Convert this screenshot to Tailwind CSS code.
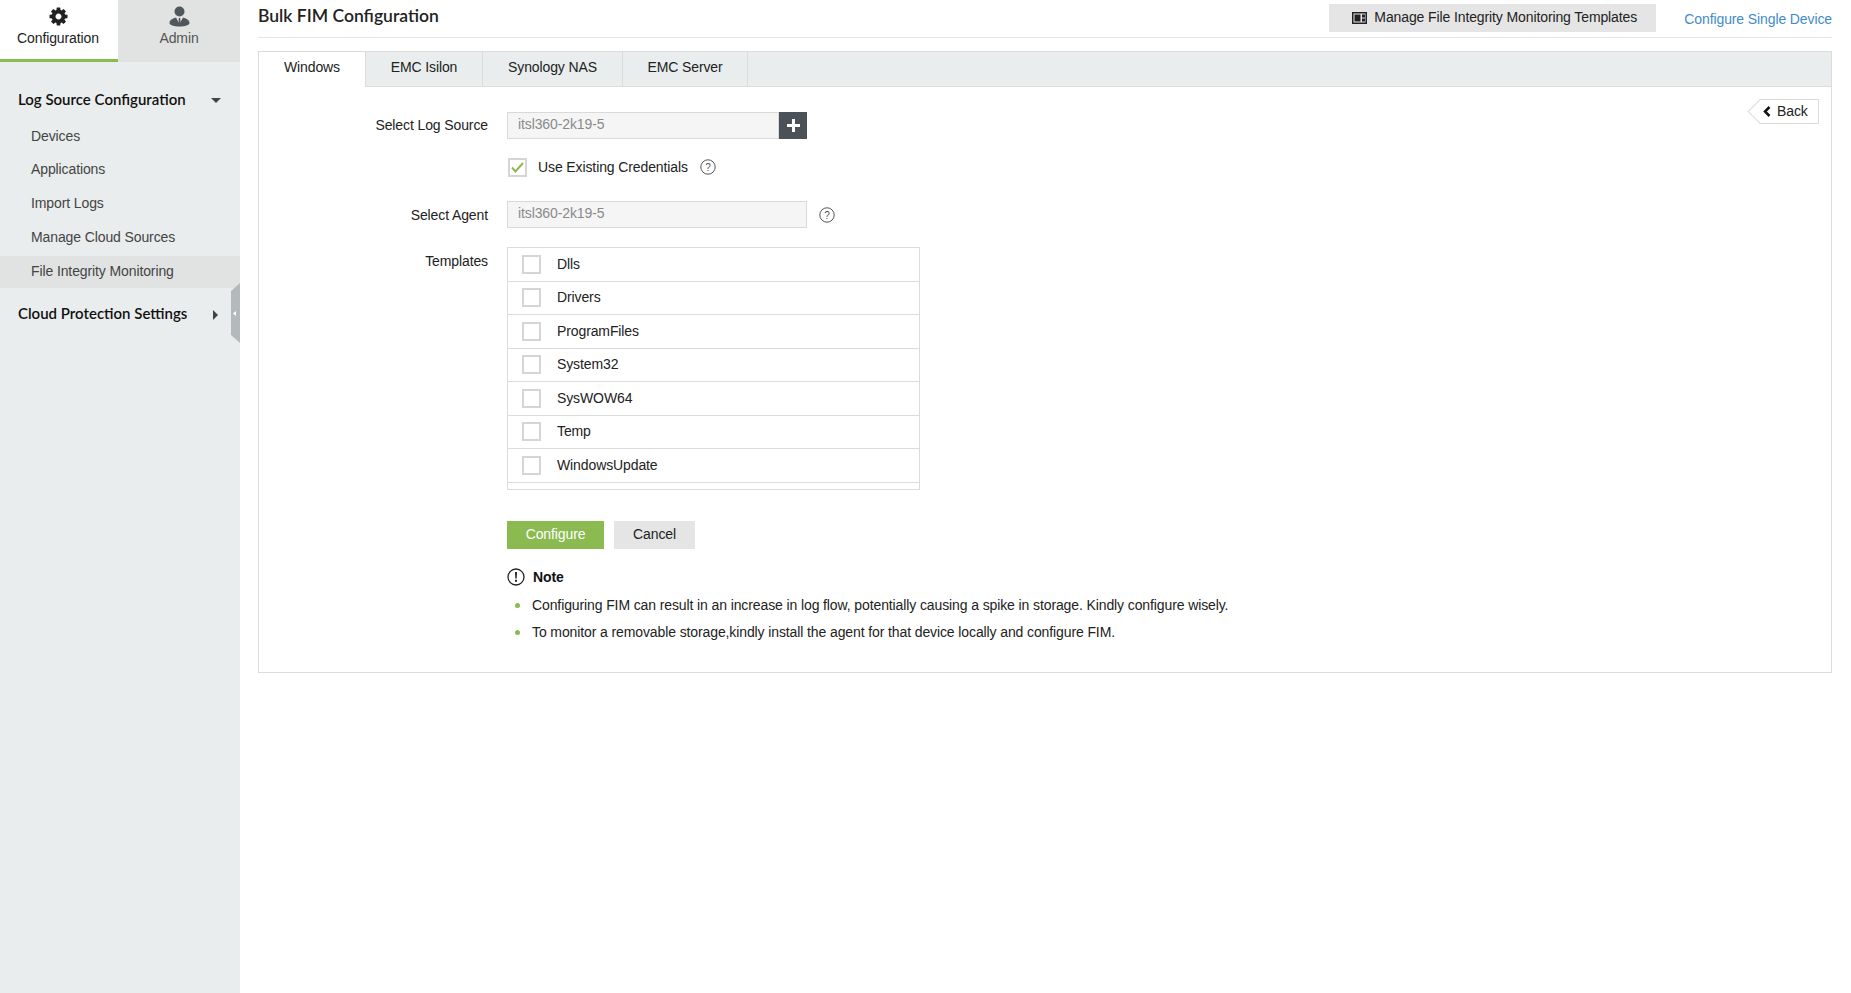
<!DOCTYPE html>
<html lang="en">
<head>
  <meta charset="UTF-8" />
  <title>Bulk FIM Configuration</title>
  <script src="https://cdn.jsdelivr.net/npm/@tailwindcss/browser@4"></script>
</head>
<body class="h-[993px] overflow-hidden bg-white font-['Liberation_Sans',sans-serif] text-[14px] tracking-[-0.11px] text-[#222]">
<div class="flex h-full">

  <!-- Sidebar -->
  <aside class="relative w-[240px] shrink-0 bg-[#e9eded]">
    <div class="flex h-[62px]">
      <div class="flex w-[118px] flex-col items-center border-b-[3px] border-[#8aba50] bg-white pr-[2px] pt-[6px] text-[#222]">
        <svg class="h-[21px] w-[21px]" viewBox="0 0 1792 1792" fill="#222"><path fill-rule="evenodd" d="M1152 896q0-106-75-181t-181-75-181 75-75 181 75 181 181 75 181-75 75-181zm512-109v222q0 12-8 23t-20 13l-185 28q-19 54-39 91 35 50 107 138 10 12 10 25t-9 23q-27 37-99 108t-94 71q-12 0-26-9l-138-108q-44 23-91 38-16 136-29 186-7 28-36 28h-222q-14 0-24.500-8.500t-11.500-21.500l-28-184q-49-16-90-37l-141 107q-10 9-25 9-14 0-25-11-126-114-165-168-7-10-7-23 0-12 8-23 15-21 51-66.500t54-70.500q-27-50-41-99l-183-27q-13-2-21-12.500t-8-23.500v-222q0-12 8-23t19-13l186-28q14-46 39-92-40-57-107-138-10-12-10-24 0-10 9-23 26-36 98.500-107.500t94.500-71.500q13 0 26 10l138 107q44-23 91-38 16-136 29-186 7-28 36-28h222q14 0 24.500 8.500t11.500 21.500l28 184q49 16 90 37l142-107q9-9 24-9 13 0 25 10 129 119 165 170 7 8 7 22 0 12-8 23-15 21-51 66.500t-54 70.500q26 50 41 98l183 28q13 2 21 12.500t8 23.500z"/></svg>
        <span class="mt-[2px] leading-[18px]">Configuration</span>
      </div>
      <div class="flex w-[122px] flex-col items-center bg-[#e1e3e3] pt-[6px] text-[#555]">
        <svg class="h-[21px] w-[21px]" viewBox="0 0 21 21" fill="#50585c"><circle cx="10.500" cy="5.500" r="5"/><path d="M.5 17c0-3 3-4.500 6.500-5.500l3 5.500h1l3-5.500c3.500 1 6.500 2.500 6.500 5.500 0 2-4.500 3.500-10 3.500S.5 19 .5 17z"/><path d="M9.800 12h1.400l.4 5-1 1.500-1-1.500z"/></svg>
        <span class="mt-[2px] leading-[18px]">Admin</span>
      </div>
    </div>

    <div class="mt-[27px] flex h-[20px] items-center justify-between pl-[18px] pr-[19px] font-['Lato',sans-serif] text-[15px] font-semibold tracking-normal text-[#111]">
      <span>Log Source Configuration</span>
      <span class="mt-[2px] h-0 w-0 border-x-[5px] border-t-[5px] border-x-transparent border-t-[#444]"></span>
    </div>
    <ul class="mt-[10px] text-[#444]">
      <li class="flex h-[34px] items-center pl-[31px]">Devices</li>
      <li class="flex h-[33px] items-center pl-[31px]">Applications</li>
      <li class="flex h-[34px] items-center pl-[31px]">Import Logs</li>
      <li class="flex h-[34px] items-center pl-[31px]">Manage Cloud Sources</li>
      <li class="mt-[2px] flex h-[32px] items-center bg-[#e1e3e3] pb-[2px] pl-[31px]">File Integrity Monitoring</li>
    </ul>
    <div class="mt-[15px] flex h-[20px] items-center justify-between pl-[18px] pr-[22px] font-['Lato',sans-serif] text-[15px] font-semibold tracking-normal text-[#111]">
      <span>Cloud Protection Settings</span>
      <span class="mt-[4px] h-0 w-0 border-y-[5px] border-l-[5px] border-y-transparent border-l-[#444]"></span>
    </div>

    <!-- collapse handle -->
    <svg class="absolute left-[231px] top-[283px]" width="9" height="60" viewBox="0 0 9 60"><path d="M0 8 9 0v60L0 52z" fill="#b4b9bc"/><path d="M5 28v5l-3-2.500z" fill="#fff"/></svg>
  </aside>

  <!-- Main -->
  <main class="min-w-0 flex-1 pl-[18px] pr-[19px]">
    <header class="flex h-[38px] items-start border-b border-[#e6e6e6]">
      <h1 class="mt-[5px] font-['Lato',sans-serif] text-[17.500px] font-semibold leading-[22px] tracking-normal text-[#222]">Bulk FIM Configuration</h1>
      <button class="ml-auto mt-[4px] flex h-[28px] w-[327px] items-center bg-[#e5e5e5] pb-[2px] pl-[23px] text-[#222]">
        <svg class="mr-[7px] mt-[2px]" width="15" height="12" viewBox="0 0 15 12"><rect x=".75" y=".75" width="13.500" height="10.500" fill="none" stroke="#222" stroke-width="1.500"/><rect x="2.500" y="2.500" width="6" height="7" fill="#222"/><rect x="10" y="2.500" width="3" height="3" fill="#222"/><rect x="10" y="6.500" width="3" height="3" fill="#222"/></svg>
        Manage File Integrity Monitoring Templates
      </button>
      <a href="#" class="ml-[28px] mt-[9px] text-[#428bca]">Configure Single Device</a>
    </header>

    <section class="relative mt-[13px] h-[622px] border border-[#dcdcdc]">
      <!-- Tabs -->
      <div class="flex h-[35px] border-b border-[#dcdcdc] bg-[#e9eded] text-center leading-[31px]">
        <div class="-mb-px h-[35px] w-[107px] border-r border-[#dcdcdc] bg-white">Windows</div>
        <div class="w-[117px] border-r border-[#dcdcdc]">EMC Isilon</div>
        <div class="w-[140px] border-r border-[#dcdcdc]">Synology NAS</div>
        <div class="w-[125px] border-r border-[#dcdcdc]">EMC Server</div>
      </div>

      <!-- Back button -->
      <button class="absolute right-[12px] top-[47px] flex h-[25px] w-[60px] items-center border border-l-0 border-[#dcdcdc] bg-white pl-[4px] text-[#222]">
        <span class="absolute -left-[8px] top-[3px] h-[17px] w-[17px] rotate-45 border-b border-l border-[#dcdcdc] bg-white"></span>
        <svg class="relative mr-[6px]" width="8" height="11" viewBox="0 0 8 11"><path d="M6.500 1 2 5.500 6.500 10" fill="none" stroke="#111" stroke-width="2.500"/></svg>
        <span class="relative">Back</span>
      </button>

      <!-- Form -->
      <div class="pt-[25px]">
        <div class="flex h-[27px] items-center">
          <label class="w-[230px] pr-[1px] text-right">Select Log Source</label>
          <div class="ml-[18px] flex h-[27px] w-[300px]">
            <div class="flex-1 border border-[#d9d9d9] bg-[#f5f5f5] pb-[2px] pl-[10px] leading-[22px] text-[#8a8a8a]">itsl360-2k19-5</div>
            <div class="flex w-[28px] items-center justify-center bg-[#4a5258]">
              <svg width="13" height="13" viewBox="0 0 13 13" fill="#fff"><path d="M5 0h3v5h5v3H8v5H5V8H0V5h5z"/></svg>
            </div>
          </div>
        </div>

        <div class="mt-[18px] flex h-[20px] items-center pl-[249px]">
          <span class="flex h-[19px] w-[19px] items-center justify-center border-2 border-[#d5d5d5] bg-white">
            <svg width="13" height="11" viewBox="0 0 13 11"><path d="M1 5.500 4.500 9.500 12 1" fill="none" stroke="#8aba50" stroke-width="2"/></svg>
          </span>
          <span class="ml-[11px]">Use Existing Credentials</span>
          <svg class="ml-[12px]" width="16" height="16" viewBox="0 0 16 16"><circle cx="8" cy="8" r="7.200" fill="none" stroke="#555"/><text x="8" y="11.500" text-anchor="middle" font-size="10" fill="#555" font-family="Liberation Sans">?</text></svg>
        </div>

        <div class="mt-[24px] flex h-[27px] items-center">
          <label class="w-[230px] pr-[1px] pt-[2px] text-right">Select Agent</label>
          <div class="ml-[18px] h-[27px] w-[300px] border border-[#d9d9d9] bg-[#f5f5f5] pb-[2px] pl-[10px] leading-[22px] text-[#8a8a8a]">itsl360-2k19-5</div>
          <svg class="ml-[12px] mt-[1px]" width="16" height="16" viewBox="0 0 16 16"><circle cx="8" cy="8" r="7.200" fill="none" stroke="#555"/><text x="8" y="11.500" text-anchor="middle" font-size="10" fill="#555" font-family="Liberation Sans">?</text></svg>
        </div>

        <div class="mt-[19px] flex items-start">
          <label class="w-[230px] pr-[1px] pt-[4px] text-right">Templates</label>
          <div class="ml-[18px] h-[243px] w-[413px] border border-[#dcdcdc] text-[#222]">
            <div class="flex h-[33.500px] items-center border-b border-[#dcdcdc] pl-[14px]"><span class="mr-[16px] h-[19px] w-[19px] border-2 border-[#d5d5d5]"></span>Dlls</div>
            <div class="flex h-[33.500px] items-center border-b border-[#dcdcdc] pl-[14px]"><span class="mr-[16px] h-[19px] w-[19px] border-2 border-[#d5d5d5]"></span>Drivers</div>
            <div class="flex h-[33.500px] items-center border-b border-[#dcdcdc] pl-[14px]"><span class="mr-[16px] h-[19px] w-[19px] border-2 border-[#d5d5d5]"></span>ProgramFiles</div>
            <div class="flex h-[33.500px] items-center border-b border-[#dcdcdc] pl-[14px]"><span class="mr-[16px] h-[19px] w-[19px] border-2 border-[#d5d5d5]"></span>System32</div>
            <div class="flex h-[33.500px] items-center border-b border-[#dcdcdc] pl-[14px]"><span class="mr-[16px] h-[19px] w-[19px] border-2 border-[#d5d5d5]"></span>SysWOW64</div>
            <div class="flex h-[33.500px] items-center border-b border-[#dcdcdc] pl-[14px]"><span class="mr-[16px] h-[19px] w-[19px] border-2 border-[#d5d5d5]"></span>Temp</div>
            <div class="flex h-[33.500px] items-center border-b border-[#dcdcdc] pl-[14px]"><span class="mr-[16px] h-[19px] w-[19px] border-2 border-[#d5d5d5]"></span>WindowsUpdate</div>
          </div>
        </div>

        <div class="ml-[248px] mt-[31px] flex gap-[10px]">
          <button class="h-[28px] w-[97px] bg-[#8aba50] pb-[2px] text-white">Configure</button>
          <button class="h-[28px] w-[81px] bg-[#e5e5e5] pb-[2px] text-[#222]">Cancel</button>
        </div>

        <div class="ml-[248px] mt-[19px] flex h-[18px] items-center">
          <svg width="18" height="18" viewBox="0 0 18 18"><circle cx="9" cy="9" r="8" fill="none" stroke="#222" stroke-width="1.300"/><path d="M8 4h2l-.3 6.500H8.300zM8 11.800h2v2H8z" fill="#222"/></svg>
          <span class="ml-[8px] font-bold text-[#111]">Note</span>
        </div>
        <ul class="ml-[248px] mt-[6px] text-[#222]">
          <li class="flex h-[27px] items-center"><span class="ml-[8px] mr-[12px] h-[5px] w-[5px] rounded-full bg-[#8aba50]"></span>Configuring FIM can result in an increase in log flow, potentially causing a spike in storage. Kindly configure wisely.</li>
          <li class="flex h-[27px] items-center"><span class="ml-[8px] mr-[12px] h-[5px] w-[5px] rounded-full bg-[#8aba50]"></span>To monitor a removable storage,kindly install the agent for that device locally and configure FIM.</li>
        </ul>
      </div>
    </section>
  </main>
</div>
</body>
</html>
